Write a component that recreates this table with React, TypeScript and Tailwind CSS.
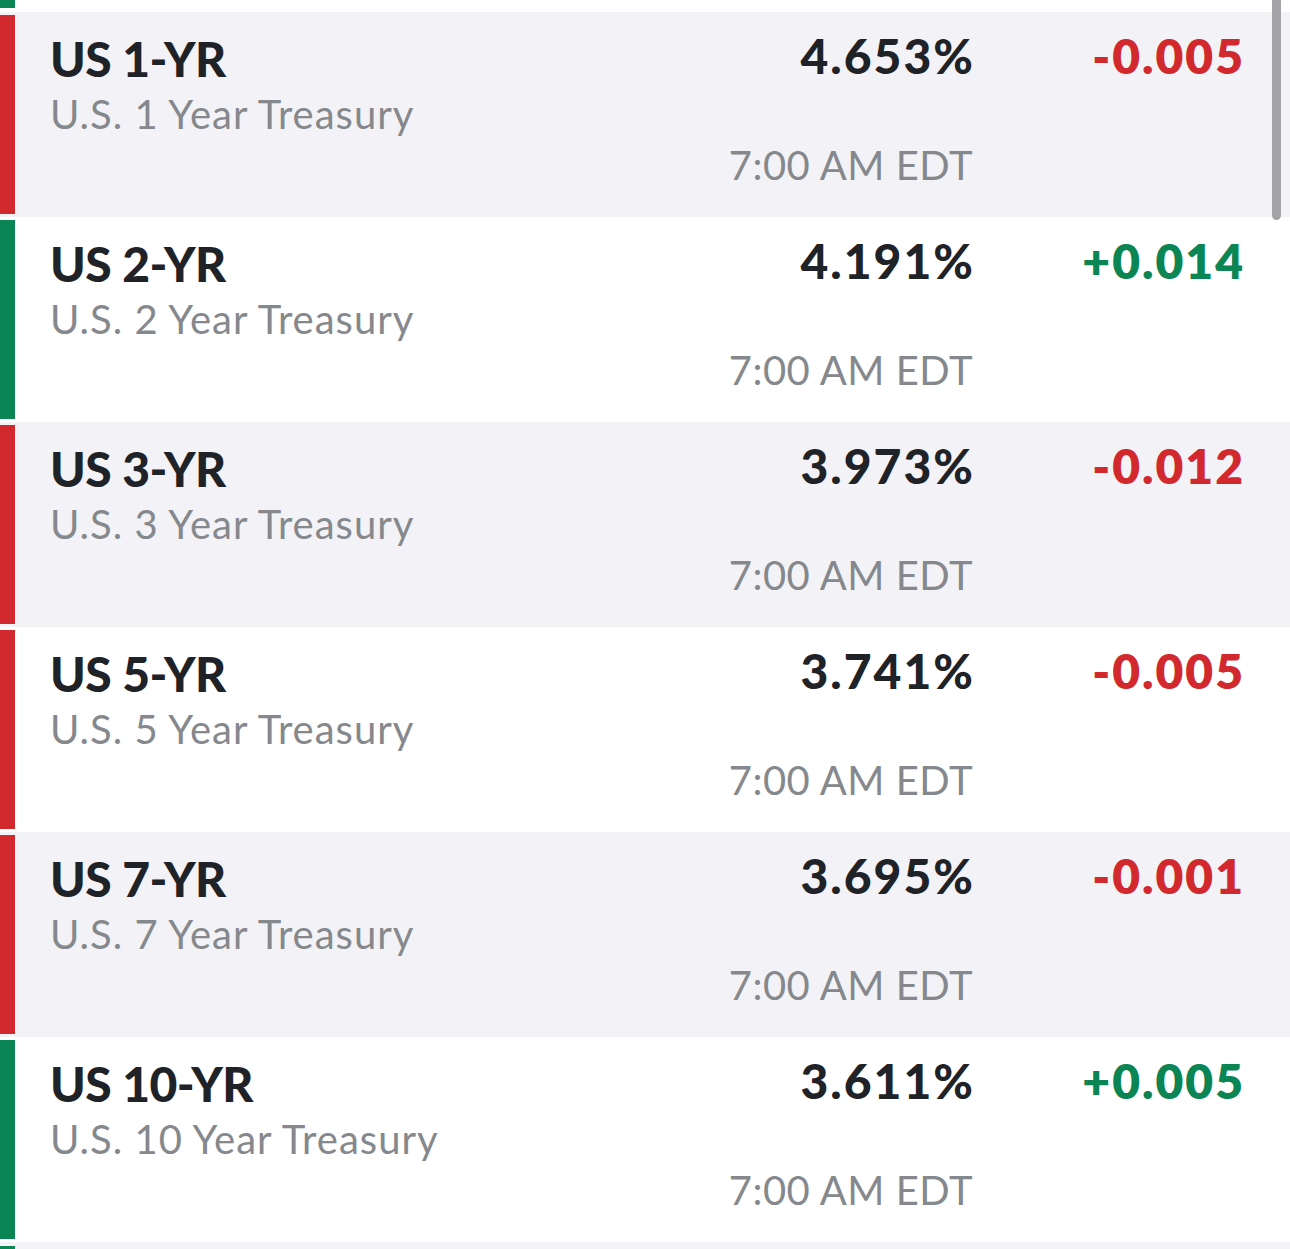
const rows = [
  { sym: "US 1-YR", name: "U.S. 1 Year Treasury", yld: "4.653%", chg: "-0.005", up: false },
  { sym: "US 2-YR", name: "U.S. 2 Year Treasury", yld: "4.191%", chg: "+0.014", up: true },
  { sym: "US 3-YR", name: "U.S. 3 Year Treasury", yld: "3.973%", chg: "-0.012", up: false },
  { sym: "US 5-YR", name: "U.S. 5 Year Treasury", yld: "3.741%", chg: "-0.005", up: false },
  { sym: "US 7-YR", name: "U.S. 7 Year Treasury", yld: "3.695%", chg: "-0.001", up: false },
  { sym: "US 10-YR", name: "U.S. 10 Year Treasury", yld: "3.611%", chg: "+0.005", up: true },
];

function QuoteRow({ row, shaded }: { row: (typeof rows)[number]; shaded: boolean }) {
  return (
    <div className={`flex h-[205px] ${shaded ? "bg-[#f3f3f7]" : "bg-white"}`}>
      <div className={`w-[15px] my-[3px] shrink-0 ${row.up ? "bg-[#0b8553]" : "bg-[#d2292f]"}`} />
      <div className="flex flex-1 pl-[35px] pr-[47px] pt-[20px] pb-[32px]">
        {/* name */}
        <div className="flex flex-col flex-1 pt-[3px]">
          <div className="text-[48px] leading-[48px] font-black text-[#1f2227] tracking-[-0.5px]">{row.sym}</div>
          <div className="mt-[11px] text-[40px] leading-[40px] tracking-[1px] text-[#85888c]">{row.name}</div>
        </div>
        {/* last + time */}
        <div className="flex flex-col items-end">
          <div className="-mr-[2px] text-[48px] leading-[48px] font-black tracking-[2px] text-[#1f2227]">{row.yld}</div>
          <div className="mt-auto text-[40px] leading-[40px] tracking-[0.5px] text-[#85888c]">7:00 AM EDT</div>
        </div>
        {/* change */}
        <div
          className={`w-[272px] -mr-[2px] text-right text-[48px] leading-[48px] font-extrabold tracking-[2px] ${
            row.up ? "text-[#0b8553]" : "text-[#d2292f]"
          }`}
        >
          {row.chg}
        </div>
      </div>
    </div>
  );
}

export default function App() {
  return (
    <div className="relative w-[1290px] h-[1249px] overflow-hidden bg-white font-['Lato',_sans-serif]">
      <div className="h-[12px]">
        <div className="w-[15px] h-[8px] bg-[#0b8553]" />
      </div>
      {rows.map((r, i) => (
        <QuoteRow key={r.sym} row={r} shaded={i % 2 === 0} />
      ))}
      <div className="h-[8px] bg-[#f3f3f7] pt-[4px]">
        <div className="w-[15px] h-full bg-[#0b8553]" />
      </div>
      {/* scrollbar */}
      <div className="absolute right-[9px] top-0 w-[9px] h-[220px] rounded-b-full bg-[#a3a3a6]" />
    </div>
  );
}
